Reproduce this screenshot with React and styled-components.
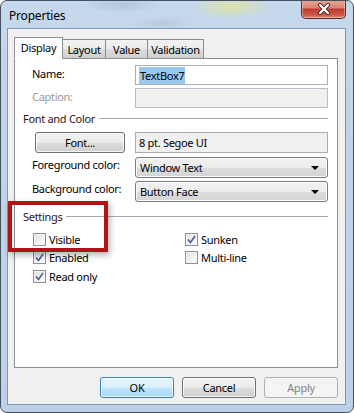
import React from "react";
import styled, { createGlobalStyle } from "styled-components";

const GlobalStyle = createGlobalStyle`
    html, body {
        margin: 0;
        padding: 0;
        background: #ffffff;
    }
    body {
        font-family: "Noto Sans", "Open Sans", sans-serif;
        font-size: 11px;
        letter-spacing: -0.3px;
        color: #000;
    }
`

const Window = styled.div`
    box-sizing: border-box;
    width: 354px;
    height: 413px;
    display: flex;
    flex-direction: column;
    border: 1px solid #44505e;
    border-radius: 7px;
    overflow: hidden;
    background:
        radial-gradient(ellipse 40px 12px at 230px 6px, rgba(226, 230, 150, 0.8), rgba(226, 230, 150, 0) 100%),
        radial-gradient(ellipse 40px 8px at 120px 4px, rgba(150, 165, 185, 0.35), rgba(150, 165, 185, 0) 100%),
        radial-gradient(ellipse 30px 6px at 160px 22px, rgba(150, 165, 185, 0.3), rgba(150, 165, 185, 0) 100%),
        linear-gradient(to bottom, #c5d8ec 0%, #c0d4ea 30%, #bcd1e9 100%);
`

const TitleBar = styled.div`
    height: 27px;
    flex: none;
    display: flex;
    justify-content: space-between;
    align-items: flex-start;
`

const Title = styled.div`
    padding: 6px 0 0 8px;
    font-size: 12px;
    letter-spacing: -0.2px;
    color: #000;
`

const CloseButton = styled.div`
    box-sizing: border-box;
    width: 45px;
    height: 19px;
    margin: -1px 7px 0 0;
    border: 1px solid #5b2b28;
    border-top: none;
    border-radius: 0 0 5px 5px;
    background: linear-gradient(to bottom, #e8a896 0%, #d98370 45%, #c0392b 50%, #cf5a4b 85%, #e0907f 100%);
    box-shadow: inset 0 0 0 1px rgba(255, 220, 210, 0.45);
    display: flex;
    align-items: center;
    justify-content: center;
`

const Client = styled.div`
    flex: 1;
    margin: 0 7px 7px 6px;
    border: 1px solid #8596ab;
    background: #f0f0f0;
    padding: 8px 7px 6px 6px;
    display: flex;
    flex-direction: column;
`

const TabStrip = styled.div`
    display: flex;
    align-items: flex-end;
    height: 22px;
    margin-bottom: -1px;
    position: relative;
    z-index: 1;
`

const Tab = styled.div`
    box-sizing: border-box;
    width: ${p => p.$w}px;
    height: ${p => (p.$active ? 22 : 20)}px;
    margin-left: ${p => (p.$first ? 0 : -1)}px;
    border: 1px solid #898c95;
    border-bottom-color: ${p => (p.$active ? "#ffffff" : "#898c95")};
    background: ${p => (p.$active ? "#ffffff" : "linear-gradient(to bottom, #f2f2f2 0%, #ebebeb 50%, #dddddd 51%, #cfcfcf 100%)")};
    position: relative;
    z-index: ${p => (p.$active ? 2 : 1)};
    display: flex;
    align-items: center;
    justify-content: center;
    padding-bottom: ${p => (p.$active ? 2 : 0)}px;
`

const Panel = styled.div`
    flex: 1;
    position: relative;
    border: 1px solid #898c95;
    background: #ffffff;
    padding: 0 9px 0 8px;
    display: flex;
    flex-direction: column;
`

const Row = styled.div`
    display: flex;
    align-items: center;
    height: ${p => p.$h}px;
    margin-top: ${p => p.$mt}px;
`

const Label = styled.div`
    box-sizing: border-box;
    width: 112px;
    padding-left: 9px;
    flex: none;
    color: ${p => (p.$disabled ? "#9a9a9a" : "#000")};
    align-self: flex-start;
    padding-top: ${p => p.$pt || 0}px;
`

const TextBox = styled.div`
    box-sizing: border-box;
    width: 193px;
    height: 100%;
    border: 1px solid ${p => (p.$disabled ? "#b4bfcb" : "#abadb3")};
    background: ${p => (p.$readonly || p.$disabled ? "#f0f0f0" : "#ffffff")};
    padding-left: 3px;
    display: flex;
    align-items: center;
`

const Selection = styled.span`
    background: #99c9ef;
    padding: 1px 1px;
`

const Combo = styled.div`
    box-sizing: border-box;
    width: 193px;
    height: 100%;
    border: 1px solid #7a7a7a;
    border-radius: 3px;
    background: linear-gradient(to bottom, #f2f2f2 0%, #ebebeb 50%, #dddddd 51%, #d4d4d4 100%);
    box-shadow: inset 0 0 0 1px #fcfcfc;
    padding: 0 8px 0 4px;
    display: flex;
    align-items: center;
    justify-content: space-between;
`

const Arrow = styled.span`
    width: 0;
    height: 0;
    border-left: 4px solid transparent;
    border-right: 4px solid transparent;
    border-top: 4px solid #000;
`

const Button = styled.div`
    box-sizing: border-box;
    width: ${p => p.$w}px;
    height: 21px;
    border: 1px solid ${p => (p.$default ? "#3c7fb1" : p.$disabled ? "#adb2b5" : "#707070")};
    border-radius: 3px;
    background: ${p =>
        p.$default
            ? "linear-gradient(to bottom, #eaf6fd 0%, #d9f0fc 50%, #bee6fd 51%, #a7d9f5 100%)"
            : p.$disabled
            ? "#f4f4f4"
            : "linear-gradient(to bottom, #f2f2f2 0%, #ebebeb 50%, #dddddd 51%, #cfcfcf 100%)"};
    box-shadow: inset 0 0 0 1px ${p => (p.$disabled ? "#f4f4f4" : "rgba(255, 255, 255, 0.75)")};
    color: ${p => (p.$disabled ? "#838383" : "#000")};
    display: flex;
    align-items: center;
    justify-content: center;
`

const FontButtonWrap = styled.div`
    width: 112px;
    padding-left: 12px;
    box-sizing: border-box;
    flex: none;
    height: 100%;
`

const GroupHeader = styled.div`
    display: flex;
    align-items: center;
    gap: 4px;
    height: 16px;
    margin-top: ${p => p.$mt}px;
    color: #2e1414;

    &::after {
        content: "";
        flex: 1;
        height: 1px;
        background: #a8a8a8;
    }
`

const CheckGrid = styled.div`
    display: grid;
    grid-template-columns: 152px 1fr;
    grid-auto-rows: 18.5px;
    padding-left: 10px;
    margin-top: 6px;
`

const CheckItem = styled.label`
    display: flex;
    align-items: center;
    gap: 3px;
`

const Box = styled.span`
    box-sizing: border-box;
    width: 13px;
    height: 13px;
    border: 1px solid #8f8f8f;
    background: linear-gradient(135deg, #dcdcdc 0%, #f4f4f4 60%, #ffffff 100%);
    box-shadow: inset 0 0 0 1px #f4f4f4;
    display: flex;
    align-items: center;
    justify-content: center;
`

const Highlight = styled.div`
    position: absolute;
    left: -7px;
    top: 142px;
    width: 100px;
    height: 51px;
    box-sizing: border-box;
    border: 4px solid #b31217;
    box-shadow: 2px 3px 6px rgba(0, 0, 0, 0.3);
    pointer-events: none;
`

const ButtonRow = styled.div`
    display: flex;
    justify-content: flex-end;
    gap: 8px;
    margin-top: 9px;
`

const Check = ({ checked, children }) => (
    <CheckItem>
        <Box>
            {checked && (
                <svg width="9" height="9" viewBox="0 0 9 9">
                    <path d="M1 4.5 L3.5 7.5 L8 1" fill="none" stroke="#4a5f97" strokeWidth="1.6" />
                </svg>
            )}
        </Box>
        <span>{children}</span>
    </CheckItem>
)

const App = () => {
    return (
        <>
            <GlobalStyle />
            <Window>
                <TitleBar>
                    <Title>Properties</Title>
                    <CloseButton>
                        <svg width="14" height="12" viewBox="0 0 14 12">
                            <path d="M3 2 L11 10 M11 2 L3 10" stroke="#4a2a2a" strokeWidth="4" strokeLinecap="round" />
                            <path d="M3 2 L11 10 M11 2 L3 10" stroke="#ffffff" strokeWidth="2.2" strokeLinecap="round" />
                        </svg>
                    </CloseButton>
                </TitleBar>
                <Client>
                    <TabStrip>
                        <Tab $w={49} $active $first>Display</Tab>
                        <Tab $w={44}>Layout</Tab>
                        <Tab $w={43}>Value</Tab>
                        <Tab $w={57}>Validation</Tab>
                    </TabStrip>
                    <Panel>
                        <Row $h={20} $mt={6}>
                            <Label $pt={1}>Name:</Label>
                            <TextBox><Selection>TextBox7</Selection></TextBox>
                        </Row>
                        <Row $h={20} $mt={3}>
                            <Label $disabled $pt={1}>Caption:</Label>
                            <TextBox $disabled />
                        </Row>
                        <GroupHeader $mt={2}>Font and Color</GroupHeader>
                        <Row $h={21} $mt={6}>
                            <FontButtonWrap>
                                <Button $w={90}>Font...</Button>
                            </FontButtonWrap>
                            <TextBox $readonly>8 pt. Segoe UI</TextBox>
                        </Row>
                        <Row $h={21} $mt={4}>
                            <Label>Foreground color:</Label>
                            <Combo>Window Text<Arrow /></Combo>
                        </Row>
                        <Row $h={21} $mt={3}>
                            <Label>Background color:</Label>
                            <Combo>Button Face<Arrow /></Combo>
                        </Row>
                        <GroupHeader $mt={6}>Settings</GroupHeader>
                        <CheckGrid>
                            <Check>Visible</Check>
                            <Check checked>Sunken</Check>
                            <Check checked>Enabled</Check>
                            <Check>Multi-line</Check>
                            <Check checked>Read only</Check>
                        </CheckGrid>
                        <Highlight />
                    </Panel>
                    <ButtonRow>
                        <Button $w={74} $default>OK</Button>
                        <Button $w={74}>Cancel</Button>
                        <Button $w={74} $disabled>Apply</Button>
                    </ButtonRow>
                </Client>
            </Window>
        </>
    );
}

export default App;
